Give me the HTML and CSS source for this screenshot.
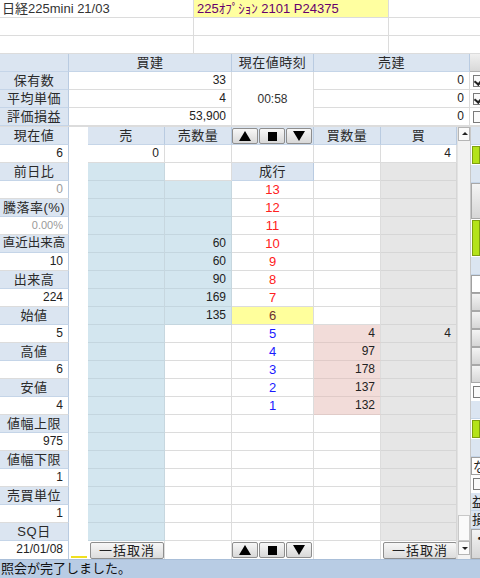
FILE: index.html
```html
<!DOCTYPE html>
<html lang="ja">
<head>
<meta charset="utf-8">
<title>板</title>
<link rel="stylesheet" href="styles.css">
</head>
<body>
<div class="page">
  <div class="topbar">
    <div class="trow"><div class="tc t1">日経225mini 21/03</div><div class="tc t2 sym">225ｵﾌﾟｼｮﾝ 2101 P24375</div><div class="tc t3"></div></div>
    <div class="trow"><div class="tc t1"></div><div class="tc t2"></div><div class="tc t3"></div></div>
    <div class="trow"><div class="tc t1"></div><div class="tc t2"></div><div class="tc t3"></div></div>
  </div>

  <div class="summary">
    <div class="c h"></div><div class="c h">買建</div><div class="c h">現在値時刻</div><div class="c h">売建</div><div class="rs btn"></div>
    <div class="c h">保有数</div><div class="c r">33</div><div class="c time">00:58</div><div class="c r">0</div><div class="rs"><span class="cb on"></span></div>
    <div class="c h">平均単価</div><div class="c r">4</div><div class="c r">0</div><div class="rs"><span class="cb on"></span></div>
    <div class="c h">評価損益</div><div class="c r">53,900</div><div class="c r">0</div><div class="rs"><span class="cb"></span></div>
  </div>

  <div class="book">
    <div class="grid">
      <div class="c h">現在値</div><div class="gap"></div><div class="c h">売</div><div class="c h">売数量</div><div class="c h pbtns"><span class="ab"><i class="tri-up"></i></span><span class="ab"><i class="sq"></i></span><span class="ab"><i class="tri-dn"></i></span></div><div class="c h">買数量</div><div class="c h">買</div>
      <div class="c r lv">6</div><div class="gap"></div><div class="c r">0</div><div class="c"></div><div class="c"></div><div class="c"></div><div class="c r">4</div>
      <div class="c h">前日比</div><div class="gap"></div><div class="c b"></div><div class="c"></div><div class="c h">成行</div><div class="c"></div><div class="c g"></div>
      <div class="c r lv muted">0</div><div class="gap"></div><div class="c b"></div><div class="c b"></div><div class="c px red">13</div><div class="c"></div><div class="c g"></div>
      <div class="c h">騰落率(%)</div><div class="gap"></div><div class="c b"></div><div class="c b"></div><div class="c px red">12</div><div class="c"></div><div class="c g"></div>
      <div class="c r lv muted sm">0.00%</div><div class="gap"></div><div class="c b"></div><div class="c b"></div><div class="c px red">11</div><div class="c"></div><div class="c g"></div>
      <div class="c h tight">直近出来高</div><div class="gap"></div><div class="c b"></div><div class="c b r">60</div><div class="c px red">10</div><div class="c"></div><div class="c g"></div>
      <div class="c r lv">10</div><div class="gap"></div><div class="c b"></div><div class="c b r">60</div><div class="c px red">9</div><div class="c"></div><div class="c g"></div>
      <div class="c h">出来高</div><div class="gap"></div><div class="c b"></div><div class="c b r">90</div><div class="c px red">8</div><div class="c"></div><div class="c g"></div>
      <div class="c r lv">224</div><div class="gap"></div><div class="c b"></div><div class="c b r">169</div><div class="c px red">7</div><div class="c"></div><div class="c g"></div>
      <div class="c h">始値</div><div class="gap"></div><div class="c b"></div><div class="c b r">135</div><div class="c px y cur">6</div><div class="c"></div><div class="c g"></div>
      <div class="c r lv">5</div><div class="gap"></div><div class="c b"></div><div class="c"></div><div class="c px blue">5</div><div class="c p r">4</div><div class="c g r">4</div>
      <div class="c h">高値</div><div class="gap"></div><div class="c b"></div><div class="c"></div><div class="c px blue">4</div><div class="c p r">97</div><div class="c g"></div>
      <div class="c r lv">6</div><div class="gap"></div><div class="c b"></div><div class="c"></div><div class="c px blue">3</div><div class="c p r">178</div><div class="c g"></div>
      <div class="c h">安値</div><div class="gap"></div><div class="c b"></div><div class="c"></div><div class="c px blue">2</div><div class="c p r">137</div><div class="c g"></div>
      <div class="c r lv">4</div><div class="gap"></div><div class="c b"></div><div class="c"></div><div class="c px blue">1</div><div class="c p r">132</div><div class="c g"></div>
      <div class="c h">値幅上限</div><div class="gap"></div><div class="c b"></div><div class="c"></div><div class="c"></div><div class="c"></div><div class="c g"></div>
      <div class="c r lv">975</div><div class="gap"></div><div class="c b"></div><div class="c"></div><div class="c"></div><div class="c"></div><div class="c g"></div>
      <div class="c h">値幅下限</div><div class="gap"></div><div class="c b"></div><div class="c"></div><div class="c"></div><div class="c"></div><div class="c g"></div>
      <div class="c r lv">1</div><div class="gap"></div><div class="c b"></div><div class="c"></div><div class="c"></div><div class="c"></div><div class="c g"></div>
      <div class="c h">売買単位</div><div class="gap"></div><div class="c b"></div><div class="c"></div><div class="c"></div><div class="c"></div><div class="c g"></div>
      <div class="c r lv">1</div><div class="gap"></div><div class="c b"></div><div class="c"></div><div class="c"></div><div class="c"></div><div class="c g"></div>
      <div class="c h">SQ日</div><div class="gap"></div><div class="c b"></div><div class="c"></div><div class="c"></div><div class="c"></div><div class="c g"></div>
      <div class="c r lv last">21/01/08</div><div class="gap mark"></div><div class="c last bc"><span class="btnx">一括取消</span></div><div class="c last"></div><div class="c last pbtns"><span class="ab"><i class="tri-up"></i></span><span class="ab"><i class="sq"></i></span><span class="ab"><i class="tri-dn"></i></span></div><div class="c last"></div><div class="c last bc"><span class="btnx">一括取消</span></div>
    </div>

    <div class="scroll">
      <div class="sarrow up"></div>
      <div class="strack"><div class="sthumb"></div></div>
      <div class="sarrow down"></div>
    </div>

    <div class="strip">
      <div class="s1 hb"></div>
      <div class="s1 green"></div>
      <div class="s1 hb"></div>
      <div class="s2 gbtn"></div>
      <div class="s2 green"></div>
      <div class="s1 hb"></div>
      <div class="s1 inp"></div>
      <div class="s1 gbtn"></div>
      <div class="s1 gbtn"></div>
      <div class="s1 gbtn"></div>
      <div class="s1 gbtn"></div>
      <div class="s1 gbtn"></div>
      <div class="s1 ck"><span class="cb"></span></div>
      <div class="s1 hb"></div>
      <div class="s1 green"></div>
      <div class="s1 hb"></div>
      <div class="s1 inp txt">な</div>
      <div class="s1 ck"><span class="cb"></span></div>
      <div class="s1 hb txt">益</div>
      <div class="s1 hb txt">損</div>
      <div class="s3 gbtn txt">・</div>
    </div>
  </div>

  <div class="status">照会が完了しました。</div>
</div>
</body>
</html>
```

FILE: styles.css
```css
* { box-sizing: border-box; }
html, body { margin: 0; padding: 0; background: #fff; }
body {
  font-family: "Liberation Sans", "Noto Sans CJK JP", sans-serif;
  font-size: 12px;
  color: #222;
}
.page { width: 480px; height: 578px; overflow: hidden; display: flex; flex-direction: column; }

/* top rows */
.topbar { display: flex; flex-direction: column; }
.trow { display: flex; height: 18px; }
.tc { height: 18px; border-bottom: 1px solid #dcdcdc; border-right: 1px solid #dcdcdc; line-height: 17px; padding-left: 2px; font-size: 13px; white-space: nowrap; overflow: hidden; }
.t1 { width: 194px; color: #333; }
.t2 { width: 195px; }
.t3 { width: 91px; border-right: none; }
.sym { background: #ffffa0; color: #66006e; font-size: 13px; padding-left: 3px; }

/* generic cells */
.c {
  height: 18px;
  line-height: 17px;
  border-right: 1px solid #dcdcdc;
  border-bottom: 1px solid #dcdcdc;
  padding: 0 5px;
  white-space: nowrap;
  overflow: hidden;
  background: #fff;
  color: #222;
}
.h {
  background: #dbe5f1;
  border-right-color: #b9cbe1;
  border-bottom-color: #c5d5e8;
  text-align: center;
  font-size: 13px;
  color: #2a2a2a;
  letter-spacing: 0.5px;
  padding: 0 1px;
}
.h.tight { letter-spacing: 0; font-size: 12.5px; }
.r { text-align: right; }
.b { background: #d3e6ef; border-bottom-color: #c4d6df; border-right-color: #c7d7df; }
.p { background: #f2dcd9; border-bottom-color: #e0cbc8; }
.g { background: #e6e6e6; border-bottom-color: #d6d6d6; border-right-color: #d6d6d6; }
.y { background: #ffff9c; }
.px { text-align: center; font-size: 13px; }
.red { color: #ff2020; }
.blue { color: #1a1aff; }
.cur { color: #6b3030; }
.lv { border-right-color: #b9cbe1; }
.muted { color: #9a9a9a; }
.sm { font-size: 11px; }

/* summary */
.summary {
  display: grid;
  grid-template-columns: 69px 163px 82px 156px 10px;
  grid-template-rows: repeat(4, 18px);
}
.time { grid-row: 2 / span 3; grid-column: 3; height: 54px; line-height: 54px; text-align: center; color: #333; }
.rs { height: 18px; border-bottom: 1px solid #dcdcdc; position: relative; overflow: hidden; }
.rs.btn { background: linear-gradient(#f0f0f0, #d8d8d8); border-bottom-color: #b0b0b0; }
.cb {
  position: absolute; left: 3px; top: 3px; width: 12px; height: 12px;
  border: 1px solid #7a7a7a; background: #fafafa;
}
.cb.on::after {
  content: ""; position: absolute; left: 2px; top: 0px; width: 4px; height: 7px;
  border-right: 2px solid #222; border-bottom: 2px solid #222; transform: rotate(40deg);
}

/* book */
.book { display: flex; height: 433px; border-top: 1px solid #dcdcdc; }
.grid {
  display: grid;
  grid-template-columns: 69px 19px 77px 67px 82px 67px 76px;
  grid-template-rows: repeat(24, 18px);
  width: 457px;
}
.gap { background: #fff; height: 18px; }
.gap.mark { position: relative; }
.gap.mark::after { content: ""; position: absolute; left: 2px; right: 1px; bottom: 1px; height: 2px; background: #f0e020; }
.last { border-bottom: none; }
.bc { padding: 1px 0 0 2px; background: #fff; }
.btnx {
  display: block; width: 74px; height: 17px; line-height: 15px;
  text-align: center; font-size: 13px; color: #222; letter-spacing: 1px;
  background: linear-gradient(#f7f7f7, #dcdcdc);
  border: 1px solid #8e8e8e; border-radius: 2px;
}
.pbtns { display: flex; gap: 1px; padding: 1px 0 0 0; }
.pbtns.last { background: #fff; }
.ab {
  width: 26px; height: 16px;
  display: flex; align-items: center; justify-content: center;
  background: linear-gradient(#f7f7f7, #d8d8d8);
  border: 1px solid #8e8e8e; border-radius: 2px;
}
.tri-up { width: 0; height: 0; border-left: 6px solid transparent; border-right: 6px solid transparent; border-bottom: 10px solid #000; }
.tri-dn { width: 0; height: 0; border-left: 6px solid transparent; border-right: 6px solid transparent; border-top: 10px solid #000; }
.sq { width: 9px; height: 9px; background: #000; }

/* scrollbar */
.scroll { width: 13px; display: flex; flex-direction: column; background: #f2f2f2; border-left: 1px solid #e2e2e2; }
.sarrow { height: 14px; background: #fbfbfb; border: 1px solid #b5b5b5; position: relative; }
.sarrow::after { content: ""; position: absolute; left: 3px; width: 0; height: 0; border-left: 3px solid transparent; border-right: 3px solid transparent; }
.sarrow.up::after { top: 4px; border-bottom: 3px solid #222; }
.sarrow.down::after { top: 5px; border-top: 3px solid #222; }
.strack { flex: 1; display: flex; flex-direction: column; justify-content: flex-end; }
.sthumb { height: 26px; background: #fafafa; border: 1px solid #c8c8c8; }
.sarrow.down { margin-bottom: 4px; }

/* right strip */
.strip { width: 10px; display: flex; flex-direction: column; background: #fff; border-left: 1px solid #c8c8c8; }
.s1 { height: 18px; position: relative; overflow: hidden; }
.s2 { height: 36px; position: relative; overflow: hidden; }
.s3 { flex: 1; position: relative; overflow: hidden; }
.hb { background: #dbe5f1; border-bottom: 1px solid #c5d5e8; }
.green { background: #b4e31a; border: 1px solid #7fa010; margin: 1px 0 1px 1px; }
.gbtn { background: linear-gradient(#f4f4f4, #d6d6d6); border: 1px solid #a8a8a8; border-right: none; }
.inp { background: #fff; border: 1px solid #a0a0a0; border-right: none; }
.ck .cb { left: 2px; top: 3px; }
.txt { font-size: 13px; line-height: 17px; padding-left: 1px; color: #222; white-space: nowrap; }

/* status */
.status { height: 19px; line-height: 18px; background: #b8cce4; color: #111; font-size: 13px; padding-left: 1px; border-top: 1px solid #a9bfd9; }
```
